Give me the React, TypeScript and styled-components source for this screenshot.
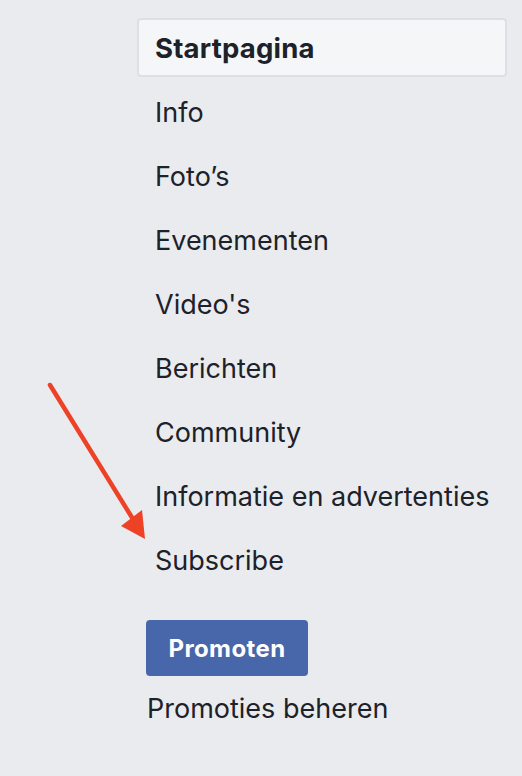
import React from "react";
import styled, { createGlobalStyle } from "styled-components";

const GlobalStyle = createGlobalStyle`
  html, body {
    margin: 0;
    padding: 0;
    background: #e9ebee;
  }
  body {
    font-family: Inter, "Liberation Sans", Arial, sans-serif;
    color: #1d2129;
  }
`;

const items = [
  "Info",
  "Foto’s",
  "Evenementen",
  "Video's",
  "Berichten",
  "Community",
  "Informatie en advertenties",
  "Subscribe",
];

export default function App() {
  return (
    <>
      <GlobalStyle />
      <Page>
        <Nav>
          <ActiveItem>Startpagina</ActiveItem>
          <ItemList>
            {items.map((label) => (
              <Item key={label}>{label}</Item>
            ))}
          </ItemList>
          <Footer>
            <PromoteButton type="button">Promoten</PromoteButton>
            <ManageLink>Promoties beheren</ManageLink>
          </Footer>
        </Nav>
        <Arrow width="130" height="180" viewBox="0 0 130 180">
          <line x1="10" y1="10" x2="96" y2="149" stroke="#ee4226" strokeWidth="4.5" strokeLinecap="round" />
          <polygon points="105,164 81,151 102,135" fill="#ee4226" />
        </Arrow>
      </Page>
    </>
  );
}

const Page = styled.div`
  position: relative;
  width: 522px;
  height: 776px;
  padding: 18px 0 0 137px;
  box-sizing: border-box;
`;

const Nav = styled.nav`
  width: 370px;
  display: flex;
  flex-direction: column;
`;

const ActiveItem = styled.div`
  height: 59px;
  box-sizing: border-box;
  display: flex;
  align-items: center;
  padding-left: 16px;
  background: #f5f6f7;
  border: 2px solid #dddfe2;
  border-radius: 4px;
  font-size: 27.5px;
  font-weight: 700;
  letter-spacing: 0.2px;
`;

const ItemList = styled.div`
  margin-top: 3px;
  display: flex;
  flex-direction: column;
`;

const Item = styled.div`
  height: 64px;
  display: flex;
  align-items: center;
  padding-left: 18px;
  font-size: 27px;
  white-space: nowrap;
`;

const Footer = styled.div`
  margin-top: 28px;
  padding-left: 9px;
  display: flex;
  flex-direction: column;
  align-items: flex-start;
`;

const PromoteButton = styled.button`
  width: 162px;
  height: 56px;
  border: none;
  border-radius: 4px;
  background: #4867aa;
  color: #fff;
  font-family: inherit;
  font-size: 24px;
  font-weight: 700;
  letter-spacing: 0.4px;
  cursor: pointer;
`;

const ManageLink = styled.div`
  height: 64px;
  display: flex;
  align-items: center;
  padding-left: 1px;
  font-size: 27px;
  white-space: nowrap;
`;

const Arrow = styled.svg`
  position: absolute;
  left: 40px;
  top: 375px;
`;
